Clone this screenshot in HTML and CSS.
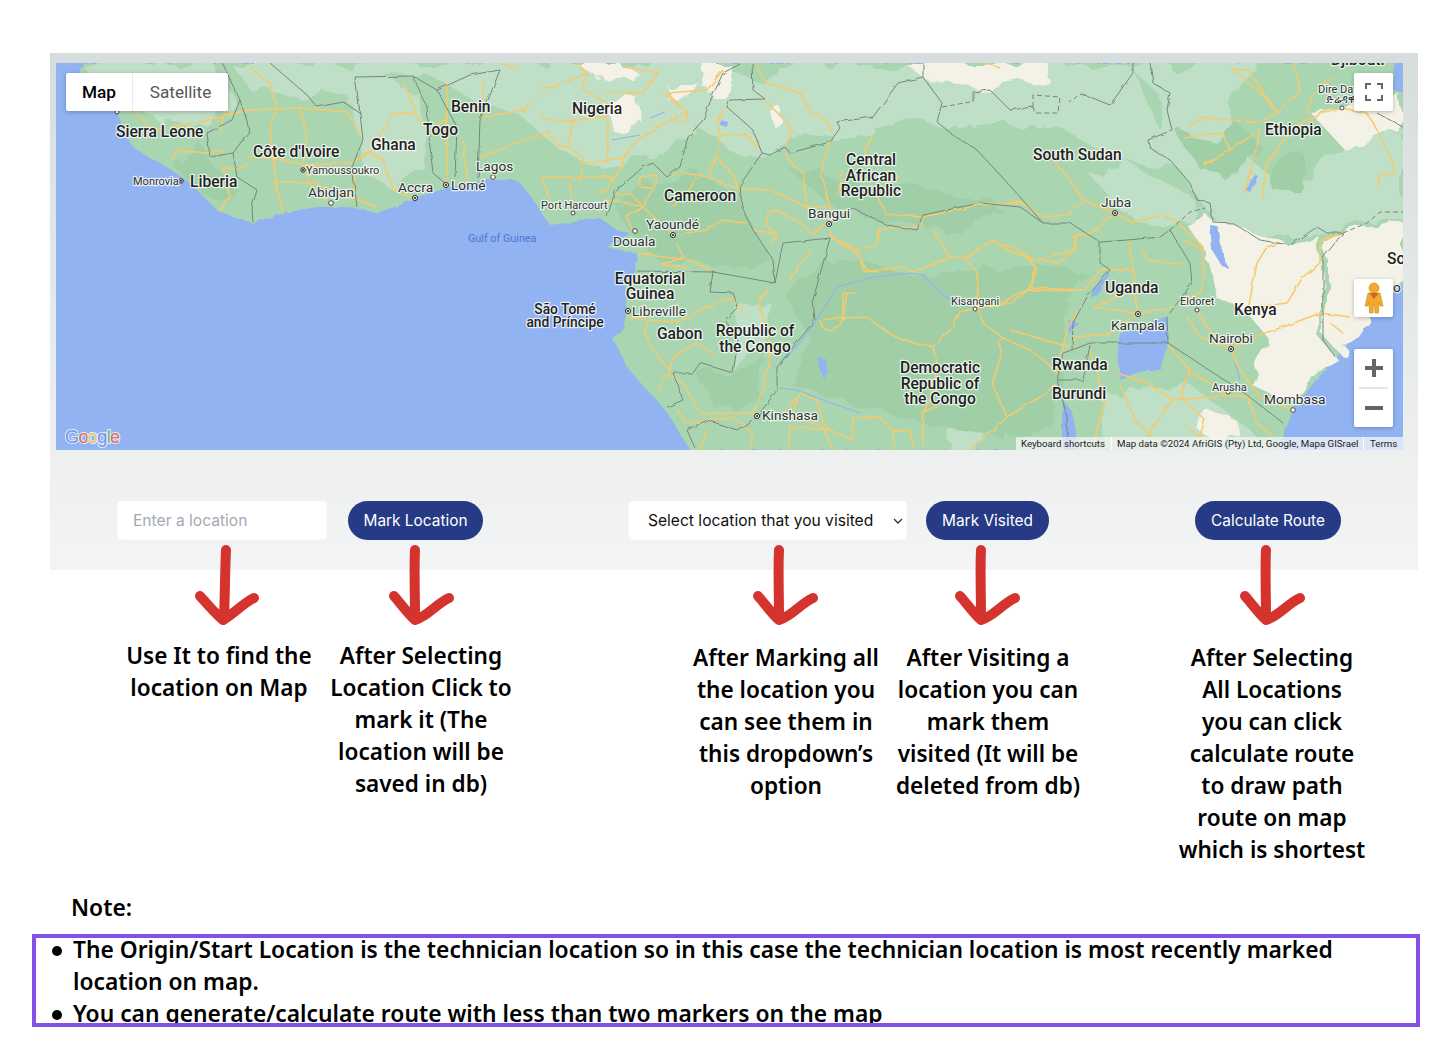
FILE: index.html
```html
<!DOCTYPE html>
<html lang="en">

<head>
    <meta charset="UTF-8">
    <meta name="viewport" content="width=device-width, initial-scale=1.0">
    <title>Route Planner Guide</title>
    <link rel="stylesheet" href="styles.css">
</head>

<body>
    <section class="panel">
        <div class="map">
            <!-- viewBox uses page coordinates so points can be read off the screen -->
            <svg class="map-art" viewBox="56 63 1347 387" width="1347" height="387">
                <defs>
                    <filter id="rough" filterUnits="userSpaceOnUse" x="56" y="63" width="1347" height="387">
                        <feTurbulence type="fractalNoise" baseFrequency="0.035" numOctaves="3" seed="4" />
                        <feDisplacementMap in="SourceGraphic" scale="26" />
                        <feGaussianBlur stdDeviation="0.7" />
                    </filter>
                    <filter id="coast" filterUnits="userSpaceOnUse" x="56" y="63" width="1347" height="387">
                        <feTurbulence type="fractalNoise" baseFrequency="0.12" numOctaves="2" seed="9" />
                        <feDisplacementMap in="SourceGraphic" scale="4" />
                    </filter>
                    <filter id="wiggle" filterUnits="userSpaceOnUse" x="56" y="63" width="1347" height="387">
                        <feTurbulence type="fractalNoise" baseFrequency="0.1" numOctaves="2" seed="2" />
                        <feDisplacementMap in="SourceGraphic" scale="3.5" />
                    </filter>
                </defs>

                <rect class="sea" x="56" y="63" width="1347" height="387" />

                <!-- land -->
                <path class="land coast" d="M84 63 L78 78 L100 95 L117 112 L125 132 L133 147 L150 158 L167 167 L190 183 L205 198 L217 210 L235 218 L253 223 L283 213 L317 207 L350 207 L377 213 L400 205 L417 197 L447 188 L487 180 L517 180 L530 195 L540 210 L550 225 L575 222 L600 218 L617 230 L630 233 L622 240 L607 247 L620 250 L637 253 L636 273 L625 285 L627 310 L623 330 L613 340 L620 352 L627 367 L645 388 L663 407 L675 425 L690 450 L1278 450 L1283 437 L1293 410 L1312 385 L1333 360 L1362 323 L1380 305 L1403 283 L1403 92 L1393 90 L1395 63 Z" />

                <g class="rough">
                    <!-- lighter zones -->
                    <path class="light" d="M230 63 L700 63 L760 80 L800 63 L1130 63 L1150 110 L1170 160 L1130 165 L1060 130 L1000 125 L950 130 L900 115 L850 135 L800 135 L770 165 L735 150 L700 130 L650 160 L600 165 L560 150 L520 115 L470 100 L420 70 L360 100 L300 95 L250 90 Z" />
                    <path class="light" d="M1125 63 L1260 63 L1225 100 L1250 160 L1290 190 L1340 150 L1403 130 L1403 215 L1330 232 L1270 240 L1215 222 L1180 170 L1150 145 L1165 100 Z" />
                    <path class="light" d="M1130 165 L1190 195 L1195 225 L1130 220 L1090 175 Z" />
                    <path class="light" d="M80 63 L215 63 L235 105 L205 125 L150 115 L105 95 Z" />
                    <path class="light" d="M350 85 L410 85 L425 135 L425 170 L395 190 L365 175 L355 130 Z" />
                    <path class="light" d="M1100 395 L1190 385 L1240 420 L1270 450 L1110 450 Z" />
                    <path class="light" d="M735 310 L770 300 L762 350 L730 365 Z" />
                    <path class="light" d="M945 415 L985 405 L990 450 L950 450 Z" />

                    <!-- cream zones -->
                    <path class="cream" d="M905 63 L1050 63 L1045 78 L1005 85 L960 88 L925 78 Z" />
                    <path class="cream" d="M575 63 L625 63 L640 75 L600 82 Z" />
                    <path class="cream" d="M600 100 L640 100 L642 122 L610 128 Z" />
                    <path class="cream" d="M665 85 L700 85 L695 100 L670 102 Z" />
                    <path class="cream" d="M705 66 L732 66 L732 93 L708 93 Z" />
                    <path class="cream" d="M770 112 L785 112 L785 125 L772 125 Z" />
                    <path class="cream" d="M1200 210 L1235 228 L1290 248 L1318 235 L1322 290 L1322 340 L1335 357 L1300 392 L1282 402 L1252 385 L1270 340 L1240 305 L1218 300 L1208 255 L1190 228 Z" />
                    <path class="cream" d="M1330 238 L1403 218 L1403 280 L1362 318 L1338 352 L1326 338 L1326 262 Z" />
                    <path class="cream" d="M1310 112 L1403 98 L1403 128 L1345 150 Z" />
                    <path class="cream" d="M1200 405 L1228 412 L1238 432 L1212 442 L1194 426 Z" />

                    <!-- darker forest zones -->
                    <path class="dark" d="M780 290 L835 255 L900 275 L990 270 L1060 310 L1050 395 L1000 440 L870 410 L790 385 L810 335 Z" />
                    <path class="dark" d="M610 200 L690 170 L735 190 L770 260 L735 268 L660 262 L630 232 Z" />
                    <path class="dark" d="M172 165 L198 140 L212 165 L235 185 L225 205 L205 195 Z" />
                    <path class="dark" d="M700 375 L770 360 L755 405 L715 410 Z" />
                    <path class="dark" d="M1005 270 L1085 270 L1065 330 L1055 425 L1010 440 Z" />
                    <path class="dark" d="M1180 135 L1215 140 L1240 125 L1265 150 L1240 175 L1200 170 Z" />
                    <path class="dark" d="M1265 165 L1305 155 L1300 190 L1272 190 Z" />
                    <path class="dark" d="M790 170 L900 185 L1000 205 L960 232 L880 220 L830 205 Z" />
                </g>

                <!-- water on land -->
                <g class="coast">
                    <path class="sea" d="M1120 333 L1137 328 L1167 317 L1168 343 L1160 370 L1142 370 L1120 380 L1117 350 Z" />
                    <path class="sea" d="M1063 400 L1072 412 L1077 437 L1076 450 L1062 450 L1062 420 Z" />
                    <path class="sea" d="M1210 225 L1217 226 L1222 250 L1228 268 L1222 266 L1212 250 Z" />
                    <path class="sea" d="M1092 293 L1108 272 L1110 276 L1100 292 L1090 298 Z" />
                    <path class="sea" d="M1255 175 L1258 176 L1250 192 L1245 190 Z" />
                    <path class="sea" d="M1068 320 L1078 322 L1070 335 Z" />
                    <path class="sea" d="M1395 63 L1403 63 L1403 92 L1393 90 Z" />
                    <path class="sea" d="M817 357 L825 358 L828 372 L824 380 L820 368 Z" />
                    <path class="sea" d="M721 119 L728 122 L727 127 L720 125 Z" />
                </g>
                <path class="river" d="M780 363 L800 343 L823 310 L837 287 L873 277 L910 273 L923 275 L937 290 L950 300 M780 388 L797 390 L823 400 L860 413 M612 140 L640 135 M650 118 L665 112 M1240 380 L1235 362" />

                <g class="wiggle">
                    <!-- west african roads -->
                    <path class="road" d="M247 110 L303 108 L347 112 L360 135 M250 68 L270 83 L277 107 L270 130 L273 158 L277 190 L283 213 M300 107 L307 137 L303 165 L313 190 L330 203 M247 157 L273 158 L303 165 L350 163 L370 153 L383 160 L393 190 L413 198 M273 183 L313 182 L350 197 L377 207 M370 153 L393 113 L417 113 L403 83 M447 83 L447 143 L447 183 M463 140 L467 183 M480 157 L517 143 L550 130 M220 210 L230 197 L223 167 L237 170 L250 163 M173 160 L177 150 L207 153 L223 150 M133 110 L153 130 L193 123 L223 117 L247 110 M220 133 L227 100 M483 83 L483 117 L523 110 L540 93 M517 70 L500 63 M350 197 L358 170 M413 113 L430 130 L447 120" />
                    <!-- nigeria and cameroon -->
                    <path class="road" d="M540 90 L560 85 L587 73 L577 63 M587 73 L583 90 L607 103 L608 160 L583 163 L580 183 M570 133 L573 120 L607 117 M608 160 L623 158 L637 140 L677 117 L687 112 L667 93 L707 90 L723 70 M607 93 L643 93 L657 72 L623 67 M663 93 L687 112 L687 122 L675 122 M540 117 L557 122 L573 120 L568 147 L560 147 L553 137 L540 138 M568 147 L583 157 L583 163 M540 177 L583 177 L613 177 L623 167 L623 158 M543 180 L550 200 M570 183 L573 207 M597 192 L607 190 L613 177" />
                    <path class="road" d="M615 193 L632 195 L643 207 L627 217 L632 230 M640 177 L657 175 L653 188 L640 187 L640 177 M653 188 L643 207 L673 235 L707 230 L722 220 L747 223 M673 177 L680 172 L707 177 L717 158 L720 135 L717 122 L727 107 M720 135 L747 135 L760 150 M717 158 L735 177 L737 188 L707 177 M697 177 L687 193 L673 207 M605 200 L640 205 M737 188 L767 190 L787 197 L807 207 L830 207 M637 253 L663 257 L690 260 L713 272 M677 243 L683 257 L663 265 L690 268 M753 230 L777 235 L773 245 M777 210 L768 212" />
                    <!-- central african republic -->
                    <path class="road" d="M785 153 L793 165 L803 173 L807 207 M823 160 L822 177 L830 207 L830 223 M830 142 L823 160 M757 67 L765 82 L800 93 L810 110 L828 122 L833 135 M765 100 L787 123 L792 133 L785 147 M873 135 L865 150 L865 165 M843 170 L838 195 M885 177 L900 177 M768 212 L777 210 L803 225 L813 235 L827 222 M768 212 L767 227 L778 235 M878 198 L887 215 L923 217 L980 205 L1020 203 M923 217 L923 227 L880 228 L878 240 M985 63 L1000 68" />
                    <!-- gabon and congo -->
                    <path class="road" d="M627 317 L647 320 L677 322 L717 303 L733 298 L743 312 M647 320 L645 333 L653 350 L670 370 L657 393 M670 370 L673 357 L697 343 L707 350 L717 357 M670 375 L683 383 L700 413 L753 413 L763 390 L770 357 L767 327 L758 303 L770 287 M847 293 L843 317 L823 320 M677 410 L687 423 L733 417 L753 433 L750 450 M707 430 L700 450 M800 393 L790 415 L823 427 L833 450 M830 230 L832 238 L857 253 L867 270 L878 272 M790 280 L800 265 L812 250" />
                    <!-- democratic republic of the congo -->
                    <path class="road" d="M832 237 L857 250 L877 245 L878 230 M857 250 L865 272 L903 267 L913 272 L950 257 L965 258 L993 240 L1013 253 L1028 258 L1057 263 L1073 250 L1075 237 L1100 230 M933 230 L950 257 M965 258 L978 273 L977 308 M1028 258 L1037 270 L1028 290 L1073 291 M1028 290 L1013 302 L977 308 L960 312 L952 328 L933 347 M843 293 L855 293 M843 293 L843 318 L833 332 L822 327 L820 320 M843 318 L867 317 L880 327 L897 338 L933 347 L937 363 L932 397 L923 412 L923 447 M977 308 L983 323 L1003 338 L1030 350 L1047 363 L1057 373 L1067 330 L1077 310 M1003 338 L998 343 L1002 353 L992 383 L1007 417 L1040 397 L1057 383 M1007 417 L993 430 L970 450 M923 412 L940 405 M800 393 L817 400 L822 420 L830 430 L852 440 L853 417 L880 418 L893 430 L895 450 M893 430 L910 430 L913 447 M790 427 L830 430 M790 427 L788 450 M780 417 L800 393" />
                    <!-- south sudan and uganda -->
                    <path class="road" d="M1053 160 L1070 180 L1083 200 L1115 213 M1000 203 L1020 202 L1043 217 L1067 215 L1083 200 M1115 213 L1133 223 L1160 215 L1175 220 L1203 247 L1203 277 L1200 293 L1173 307 L1138 313 M1115 213 L1093 232 L1077 237 L1075 250 L1033 260 L1013 247 L1000 243 M1143 250 L1147 260 L1183 265 M1128 240 L1133 270 L1100 270 L1085 290 L1032 288 L1000 303 M1133 270 L1138 313 M1133 290 L1093 307 L1138 313 M1138 313 L1110 333 L1077 337 L1070 347 L1010 330 M1035 263 L1032 288" />
                    <!-- kenya and tanzania -->
                    <path class="road" d="M1197 310 L1207 327 L1231 349 L1253 337 L1283 327 L1320 313 L1350 317 M1231 349 L1240 370 L1260 397 L1293 410 M1248 310 L1257 263 L1267 247 L1280 243 M1247 308 L1287 303 L1303 277 L1320 263 L1320 243 L1340 233 M1183 240 L1203 250 M1187 317 L1200 337 L1231 349 M1187 370 L1210 383 L1227 395 L1248 397 M1227 395 L1213 397 L1173 400 L1147 383 L1117 373 M1173 400 L1153 427 L1143 447 M1248 397 L1257 423 L1273 437 M1187 427 L1207 443 M1330 323 L1343 333 M1168 345 L1190 370 L1180 395 L1205 420 L1195 450 M1090 350 L1105 400 L1092 450 M1120 385 L1135 420 L1165 450" />
                    <!-- ethiopia -->
                    <path class="road" d="M1183 138 L1223 133 L1230 150 L1203 165 M1187 127 L1203 118 L1260 122 L1277 113 L1300 90 L1293 63 M1277 113 L1260 92 L1233 70 L1248 70 L1277 113 M1230 150 L1260 130 L1253 160 L1245 193 M1263 197 L1267 163 L1277 150 L1290 130 L1320 113 L1342 108 L1367 113 L1377 130 L1393 163 L1395 173 L1378 177 L1379 188 M1307 113 L1313 93 L1333 77" />

                    <!-- borders -->
                    <path class="border" d="M253 223 L252 207 L257 190 L237 177 L233 153 L210 157 L207 133 L232 120 L240 100 L250 130 L233 153 M222 63 L240 100 M307 95 L317 107 L343 102 L360 113 L363 140 L352 167 L357 207 M355 77 L413 76 L427 107 L430 147 L433 173 L447 185 M413 76 L437 90 L457 127 L455 177 M437 90 L470 75 L500 70 L480 120 L478 178 M355 77 L360 113 M270 63 L307 95" />
                    <path class="border" d="M607 217 L615 192 L643 167 L653 163 L667 177 L680 167 L688 137 L703 120 L712 97 L723 73 L742 63 M752 63 L753 90 L765 99 L730 100 L727 107 L753 130 L762 153 L740 185 L742 207 L753 230 L773 260 L775 283 M637 271 L713 272 L775 283 M713 272 L710 292 L733 293 L738 307 L725 320 L738 340 L733 373 L700 363 L693 373 L673 373 L683 400 L667 407 M775 283 L783 243 L830 238 M830 238 L813 300 L815 320 L777 367 L777 390 L757 417 L737 430 L707 420 L687 430 L695 448" />
                    <path class="border" d="M762 153 L770 155 L785 147 L790 153 L830 142 L840 128 L837 122 L873 117 L898 83 L923 77 L923 63 M923 77 L942 103 L937 122 L953 135 L977 150 L1002 177 L1020 197 L1043 223 M830 223 L853 208 L887 225 L917 230 L923 215 L980 203 L1020 207 L1043 223 L1070 223 L1100 242 L1127 240 L1160 237 L1170 230 L1190 263 L1192 283 L1167 317 L1168 343 M1100 242 L1100 263 L1110 270 L1087 297 L1073 323 L1072 350 L1090 343 L1168 343 L1247 395 L1283 423 M1072 350 L1063 353 L1057 380 L1083 380 L1090 345 M1057 380 L1067 417 L1067 450" />
                    <path class="border" d="M973 102 L973 92 L990 90 L1010 110 L1033 107 M1070 103 L1080 93 L1110 105 L1133 73 L1133 63 M1150 63 L1153 83 L1170 93 L1167 110 L1172 130 L1148 140 L1150 148 L1170 160 L1190 183 L1197 200 L1210 203 L1213 222 L1233 223 L1260 240 L1290 245 L1317 227 L1327 233 L1343 233 L1323 258 L1323 340 L1335 357 M1377 113 L1403 127" />
                </g>
                <path class="border-dash" d="M942 107 L970 102 M1033 107 L1033 95 L1060 97 L1058 113 L1035 113 Z M1343 233 L1367 223 L1380 212 L1403 212 M1170 230 L1190 212 L1205 208" />

                <!-- city markers -->
                <g class="ring">
                    <circle cx="415" cy="198" r="2.5" /><circle cx="303" cy="170" r="2.2" /><circle cx="181" cy="181" r="2.2" />
                    <circle cx="446" cy="185" r="2.5" /><circle cx="628" cy="311" r="2.5" /><circle cx="673" cy="235" r="2.5" />
                    <circle cx="829" cy="224" r="2.5" /><circle cx="757" cy="416" r="2.5" /><circle cx="1115" cy="213" r="2.5" />
                    <circle cx="1138" cy="314" r="2.5" /><circle cx="1231" cy="349" r="2.5" />
                </g>
                <g class="dot">
                    <circle cx="415" cy="198" r="1.1" /><circle cx="446" cy="185" r="1.1" /><circle cx="628" cy="311" r="1.1" />
                    <circle cx="673" cy="235" r="1.1" /><circle cx="829" cy="224" r="1.1" /><circle cx="757" cy="416" r="1.1" />
                    <circle cx="1115" cy="213" r="1.1" /><circle cx="1138" cy="314" r="1.1" /><circle cx="1231" cy="349" r="1.1" />
                    <circle cx="303" cy="170" r="1" /><circle cx="181" cy="181" r="1" />
                </g>
                <g class="pin">
                    <circle cx="331" cy="203" r="2.3" /><circle cx="493" cy="177" r="2.3" /><circle cx="573" cy="213" r="2" />
                    <circle cx="635" cy="231" r="2.3" /><circle cx="975" cy="309" r="2" /><circle cx="1197" cy="310" r="2" />
                    <circle cx="1228" cy="392" r="2" /><circle cx="1293" cy="410" r="2.3" /><circle cx="1342" cy="108" r="2" />
                    <circle cx="117" cy="112" r="2" />
                </g>

                <!-- country labels -->
                <g class="label-country">
                    <text x="116" y="137">Sierra Leone</text>
                    <text x="190" y="187">Liberia</text>
                    <text x="253" y="157">Côte d'Ivoire</text>
                    <text x="371" y="150">Ghana</text>
                    <text x="423" y="135">Togo</text>
                    <text x="451" y="112">Benin</text>
                    <text x="572" y="114">Nigeria</text>
                    <text x="664" y="201">Cameroon</text>
                    <text x="1033" y="160">South Sudan</text>
                    <text x="1265" y="135">Ethiopia</text>
                    <text x="657" y="339">Gabon</text>
                    <text x="1105" y="293">Uganda</text>
                    <text x="1234" y="315">Kenya</text>
                    <text x="1052" y="370">Rwanda</text>
                    <text x="1052" y="399">Burundi</text>
                    <text x="1387" y="264">So</text>
                    <text x="1331" y="65">Djibouti</text>
                </g>
                <g class="label-country label-center">
                    <text x="871" y="165">Central</text>
                    <text x="871" y="181">African</text>
                    <text x="871" y="196">Republic</text>
                    <text x="650" y="284">Equatorial</text>
                    <text x="650" y="299">Guinea</text>
                    <text x="755" y="336">Republic of</text>
                    <text x="755" y="352">the Congo</text>
                    <text x="940" y="373">Democratic</text>
                    <text x="940" y="389">Republic of</text>
                    <text x="940" y="404">the Congo</text>
                </g>
                <g class="label-island label-center">
                    <text x="565" y="314">São Tomé</text>
                    <text x="565" y="327">and Príncipe</text>
                </g>

                <!-- city labels -->
                <g class="label-city">
                    <text x="476" y="171">Lagos</text>
                    <text x="451" y="190">Lomé</text>
                    <text x="398" y="192">Accra</text>
                    <text x="308" y="197">Abidjan</text>
                    <text x="646" y="229">Yaoundé</text>
                    <text x="613" y="246">Douala</text>
                    <text x="632" y="316">Libreville</text>
                    <text x="808" y="218">Bangui</text>
                    <text x="762" y="420">Kinshasa</text>
                    <text x="1101" y="207">Juba</text>
                    <text x="1111" y="330">Kampala</text>
                    <text x="1209" y="343">Nairobi</text>
                    <text x="1264" y="404">Mombasa</text>
                    <text x="1381" y="292">Mo</text>
                </g>
                <g class="label-small">
                    <text x="306" y="174">Yamoussoukro</text>
                    <text x="133" y="185">Monrovia</text>
                    <text x="541" y="209">Port Harcourt</text>
                    <text x="951" y="305">Kisangani</text>
                    <text x="1180" y="305">Eldoret</text>
                    <text x="1212" y="391">Arusha</text>
                    <text x="1318" y="93">Dire Dawa</text>
                    <text x="1326" y="103">ድሬዳዋ</text>
                </g>
                <text class="label-sea" x="468" y="242">Gulf of Guinea</text>

                <text class="google-logo" x="65" y="443"><tspan class="g-blue">G</tspan><tspan class="g-red">o</tspan><tspan class="g-yellow">o</tspan><tspan class="g-blue">g</tspan><tspan class="g-green">l</tspan><tspan class="g-red">e</tspan></text>
            </svg>

            <div class="map-type">
                <span class="map-tab tab-map">Map</span>
                <span class="map-tab tab-sat">Satellite</span>
            </div>

            <div class="map-btn fullscreen">
                <svg viewBox="0 0 18 18" width="18" height="18">
                    <path d="M1 6V1H6M12 1H17V6M17 12V17H12M6 17H1V12" />
                </svg>
            </div>

            <div class="map-btn pegman">
                <svg viewBox="0 0 20 32" width="20" height="32">
                    <circle class="peg-body" cx="10" cy="6" r="5" />
                    <path class="peg-body" d="M4 11 H16 L19 24 L16 24 L15 20 L14.5 31 H11 L10.5 23 H9.5 L9 31 H5.5 L5 20 L4 24 L1 24 Z" />
                    <path class="peg-collar" d="M5 11 L10 17 L15 11 Z" />
                </svg>
            </div>

            <div class="zoom-ctrl">
                <div class="zoom-btn">
                    <svg viewBox="0 0 18 18" width="18" height="18"><path d="M0 9H18M9 0V18" /></svg>
                </div>
                <div class="zoom-line"></div>
                <div class="zoom-btn">
                    <svg viewBox="0 0 18 18" width="18" height="18"><path d="M0 9H18" /></svg>
                </div>
            </div>

            <div class="attribution">
                <span class="attr-item attr-keys">Keyboard shortcuts</span>
                <span class="attr-item attr-data">Map data ©2024 AfriGIS (Pty) Ltd, Google, Mapa GISrael</span>
                <span class="attr-item attr-terms">Terms</span>
            </div>
        </div>

        <div class="controls">
            <input class="field location-input" type="text" placeholder="Enter a location">
            <button class="btn mark-location">Mark Location</button>
            <div class="select-wrap">
                <select class="field visited-select">
                    <option>Select location that you visited</option>
                </select>
                <svg class="chevron" viewBox="0 0 10 6" width="10" height="6"><path d="M1 1L5 5L9 1" /></svg>
            </div>
            <button class="btn mark-visited">Mark Visited</button>
            <button class="btn calc-route">Calculate Route</button>
        </div>
    </section>

    <div class="arrows">
        <svg class="arrow" viewBox="0 0 70 81" width="70" height="81"><use href="#arrowTilted" /></svg>
        <svg class="arrow" viewBox="0 0 70 81" width="70" height="81"><use href="#arrowStraight" /></svg>
        <svg class="arrow" viewBox="0 0 70 81" width="70" height="81"><use href="#arrowStraight" /></svg>
        <svg class="arrow" viewBox="0 0 70 81" width="70" height="81"><use href="#arrowStraight" /></svg>
        <svg class="arrow" viewBox="0 0 70 81" width="70" height="81"><use href="#arrowStraight" /></svg>
    </div>

    <svg class="defs" width="0" height="0">
        <defs>
            <path id="arrowTilted" class="arrow-line" d="M34 6 C33 25 33 50 32 74 M8 52 C15 60 24 70 31 76 C42 70 50 60 62 54" />
            <path id="arrowStraight" class="arrow-line" d="M29 6 C28 25 29 50 29 74 M8 52 C15 60 22 70 29 76 C42 72 50 60 63 54" />
        </defs>
    </svg>

    <div class="notes">
        <p class="note">Use It to find the<br>location on Map</p>
        <p class="note">After Selecting<br>Location Click to<br>mark it (The<br>location will be<br>saved in db)</p>
        <p class="note note-low">After Marking all<br>the location you<br>can see them in<br>this dropdown’s<br>option</p>
        <p class="note note-low">After Visiting a<br>location you can<br>mark them<br>visited (It will be<br>deleted from db)</p>
        <p class="note note-low">After Selecting<br>All Locations<br>you can click<br>calculate route<br>to draw path<br>route on map<br>which is shortest</p>
    </div>

    <p class="note-title">Note:</p>
    <div class="note-box">
        <ul class="note-list">
            <li>The Origin/Start Location is the technician location so in this case the technician location is most recently marked location on map.</li>
            <li>You can generate/calculate route with less than two markers on the map</li>
        </ul>
    </div>
</body>

</html>
```

FILE: styles.css
```css
body {
    margin: 0;
    padding: 0;
    background: #fff;
    font-family: 'Inter', sans-serif;
    color: #000;
    overflow: hidden;
}

.panel {
    box-sizing: border-box;
    width: 1368px;
    height: 517px;
    margin: 53px 0 0 50px;
    padding: 10px 15px 0 6px;
    background: linear-gradient(to bottom, #d7dcdc, #eef0f0 78%, #f3f4f5);
}

/* Map */
.map {
    position: relative;
    width: 1347px;
    height: 387px;
    overflow: hidden;
}

.map-art {
    display: block;
}

.sea { fill: #91b3f1; }
.land { fill: #aad5b1; }
.light { fill: #bfdfc6; }
.cream { fill: #f4f1e6; }
.dark { fill: #a0cfa7; }

.coast { filter: url(#coast); }
.rough { filter: url(#rough); }
.wiggle { filter: url(#wiggle); }

.river {
    fill: none;
    stroke: #91b3f1;
    stroke-width: 1.2;
}

.road {
    fill: none;
    stroke: #f5ca6c;
    stroke-width: 1.5;
    stroke-linejoin: round;
}

.border {
    fill: none;
    stroke: #76867d;
    stroke-width: 1;
    stroke-linejoin: round;
}

.border-dash {
    fill: none;
    stroke: #76867d;
    stroke-width: 1;
    stroke-dasharray: 5 3;
}

.ring circle {
    fill: #fff;
    stroke: #222;
    stroke-width: 1;
}

.dot circle { fill: #222; }

.pin circle {
    fill: #fff;
    stroke: #444;
    stroke-width: 1;
}

.map-art text {
    font-family: 'Roboto', sans-serif;
    paint-order: stroke;
    stroke: rgba(255, 255, 255, 0.75);
    stroke-width: 2.5px;
    stroke-linejoin: round;
}

.label-country {
    font-size: 15.6px;
    font-weight: 500;
    fill: #1f2322;
}

.label-center { text-anchor: middle; }

.label-island {
    font-size: 13.8px;
    font-weight: 500;
    fill: #1f2322;
}

.label-city {
    font-size: 13.7px;
    fill: #2d3130;
}

.label-small {
    font-size: 11px;
    fill: #2d3130;
}

.map-art .label-sea {
    font-size: 10.8px;
    fill: #4a76d4;
    stroke: none;
}

.map-art .google-logo {
    font-family: 'Liberation Sans', sans-serif;
    font-size: 18px;
    stroke-width: 2px;
    letter-spacing: -0.6px;
}

.g-blue { fill: #6f94e8; }
.g-red { fill: #dc6a5e; }
.g-yellow { fill: #e8c55a; }
.g-green { fill: #6fb57d; }

.map-type {
    position: absolute;
    top: 10px;
    left: 10px;
    display: flex;
    height: 38px;
    background: #fff;
    border-radius: 2px;
    box-shadow: 0 1px 4px rgba(0, 0, 0, 0.25);
    font-family: 'Roboto', sans-serif;
    font-size: 17.2px;
    line-height: 38px;
    color: #565656;
}

.map-tab {
    box-sizing: border-box;
    text-align: center;
}

.tab-map {
    width: 67px;
    border-right: 1px solid #ebebeb;
    font-weight: 500;
    color: #000;
}

.tab-sat {
    width: 95px;
}

.map-btn {
    position: absolute;
    left: 1298px;
    display: flex;
    align-items: center;
    justify-content: center;
    width: 39px;
    height: 38px;
    background: #fff;
    border-radius: 2px;
    box-shadow: 0 1px 4px rgba(0, 0, 0, 0.25);
}

.fullscreen { top: 10px; }
.pegman { top: 216px; }

.fullscreen path,
.zoom-btn path {
    fill: none;
    stroke: #666;
}

.fullscreen path { stroke-width: 2; }
.zoom-btn path { stroke-width: 4; }

.peg-body {
    fill: #f3a92c;
    stroke: #c98a1e;
    stroke-width: 0.6;
}

.peg-collar { fill: #d0662b; }

.zoom-ctrl {
    position: absolute;
    top: 286px;
    left: 1298px;
    width: 39px;
    height: 78px;
    background: #fff;
    border-radius: 2px;
    box-shadow: 0 1px 4px rgba(0, 0, 0, 0.25);
}

.zoom-btn {
    display: flex;
    align-items: center;
    justify-content: center;
    height: 38px;
}

.zoom-line {
    height: 2px;
    margin: 0 5px;
    background: #e6e6e6;
}

.attribution {
    position: absolute;
    right: 0;
    bottom: 0;
    display: flex;
    height: 13px;
    font-family: 'Roboto', sans-serif;
    font-size: 9.7px;
    line-height: 13px;
    color: #1c1c1c;
}

.attr-item {
    box-sizing: border-box;
    padding-left: 5px;
    background: rgba(245, 245, 245, 0.75);
    white-space: nowrap;
}

.attr-keys {
    width: 96px;
    border-right: 1px solid #fff;
}

.attr-data {
    width: 252px;
    border-right: 1px solid #fff;
}

.attr-terms {
    width: 39px;
    padding-left: 6px;
}

/* Form controls */
.controls {
    display: flex;
    align-items: center;
    margin: 51px 0 0 61px;
}

.field {
    box-sizing: border-box;
    height: 39px;
    background: #fff;
    border: 1px solid #f9fafa;
    border-radius: 4px;
    font-family: 'Inter', sans-serif;
    font-size: 15.6px;
    color: #111;
    outline: none;
}

.location-input {
    width: 210px;
    padding: 0 15px;
}

.location-input::placeholder {
    color: #a3a9b3;
}

.select-wrap {
    position: relative;
    width: 279px;
    margin-left: 145px;
}

.visited-select {
    display: block;
    width: 100%;
    padding: 0 19px;
    appearance: none;
}

.chevron {
    position: absolute;
    top: 17px;
    right: 4px;
}

.chevron path {
    fill: none;
    stroke: #333;
    stroke-width: 1.3;
}

.btn {
    height: 39px;
    padding: 0;
    background: #263a85;
    border: none;
    border-radius: 20px;
    font-family: 'Inter', sans-serif;
    font-size: 15.4px;
    color: #fff;
    cursor: pointer;
}

.mark-location {
    width: 135px;
    margin-left: 21px;
}

.mark-visited {
    width: 123px;
    margin-left: 19px;
}

.calc-route {
    width: 146px;
    margin-left: 146px;
}

/* Hand drawn arrows */
.arrows {
    position: relative;
    display: grid;
    grid-template-columns: 194px 364px 202px 285px 70px;
    margin-top: -26px;
    padding-left: 192px;
}

.arrow {
    display: block;
}

.defs {
    position: absolute;
}

.arrow-line {
    fill: none;
    stroke: #d5332d;
    stroke-width: 10;
    stroke-linecap: round;
    stroke-linejoin: round;
}

/* Annotations */
.notes {
    display: grid;
    grid-template-columns: 202px 365px 202px 284px 200px;
    height: 226px;
    margin-top: 15px;
    padding-left: 119px;
}

.note {
    width: 200px;
    margin: 0;
    font-family: 'Noto Sans', sans-serif;
    font-size: 22.6px;
    font-weight: 600;
    line-height: 32px;
    text-align: center;
    white-space: nowrap;
}

.note-low {
    margin-top: 2px;
}

.note-title {
    margin: 26px 0 0 71px;
    font-family: 'Noto Sans', sans-serif;
    font-size: 22.8px;
    font-weight: 600;
    line-height: 32px;
}

.note-box {
    box-sizing: border-box;
    width: 1388px;
    height: 93px;
    margin: 10px 0 0 32px;
    border: 4px solid #8350e8;
    overflow: hidden;
}

.note-list {
    margin: -4px 0 0;
    padding: 0 40px 0 37px;
    list-style: none;
    font-family: 'Noto Sans', sans-serif;
    font-size: 22.8px;
    font-weight: 600;
    line-height: 32px;
}

.note-list li {
    position: relative;
}

.note-list li::before {
    content: "";
    position: absolute;
    top: 12px;
    left: -21px;
    width: 10px;
    height: 10px;
    border-radius: 50%;
    background: #000;
}
```
